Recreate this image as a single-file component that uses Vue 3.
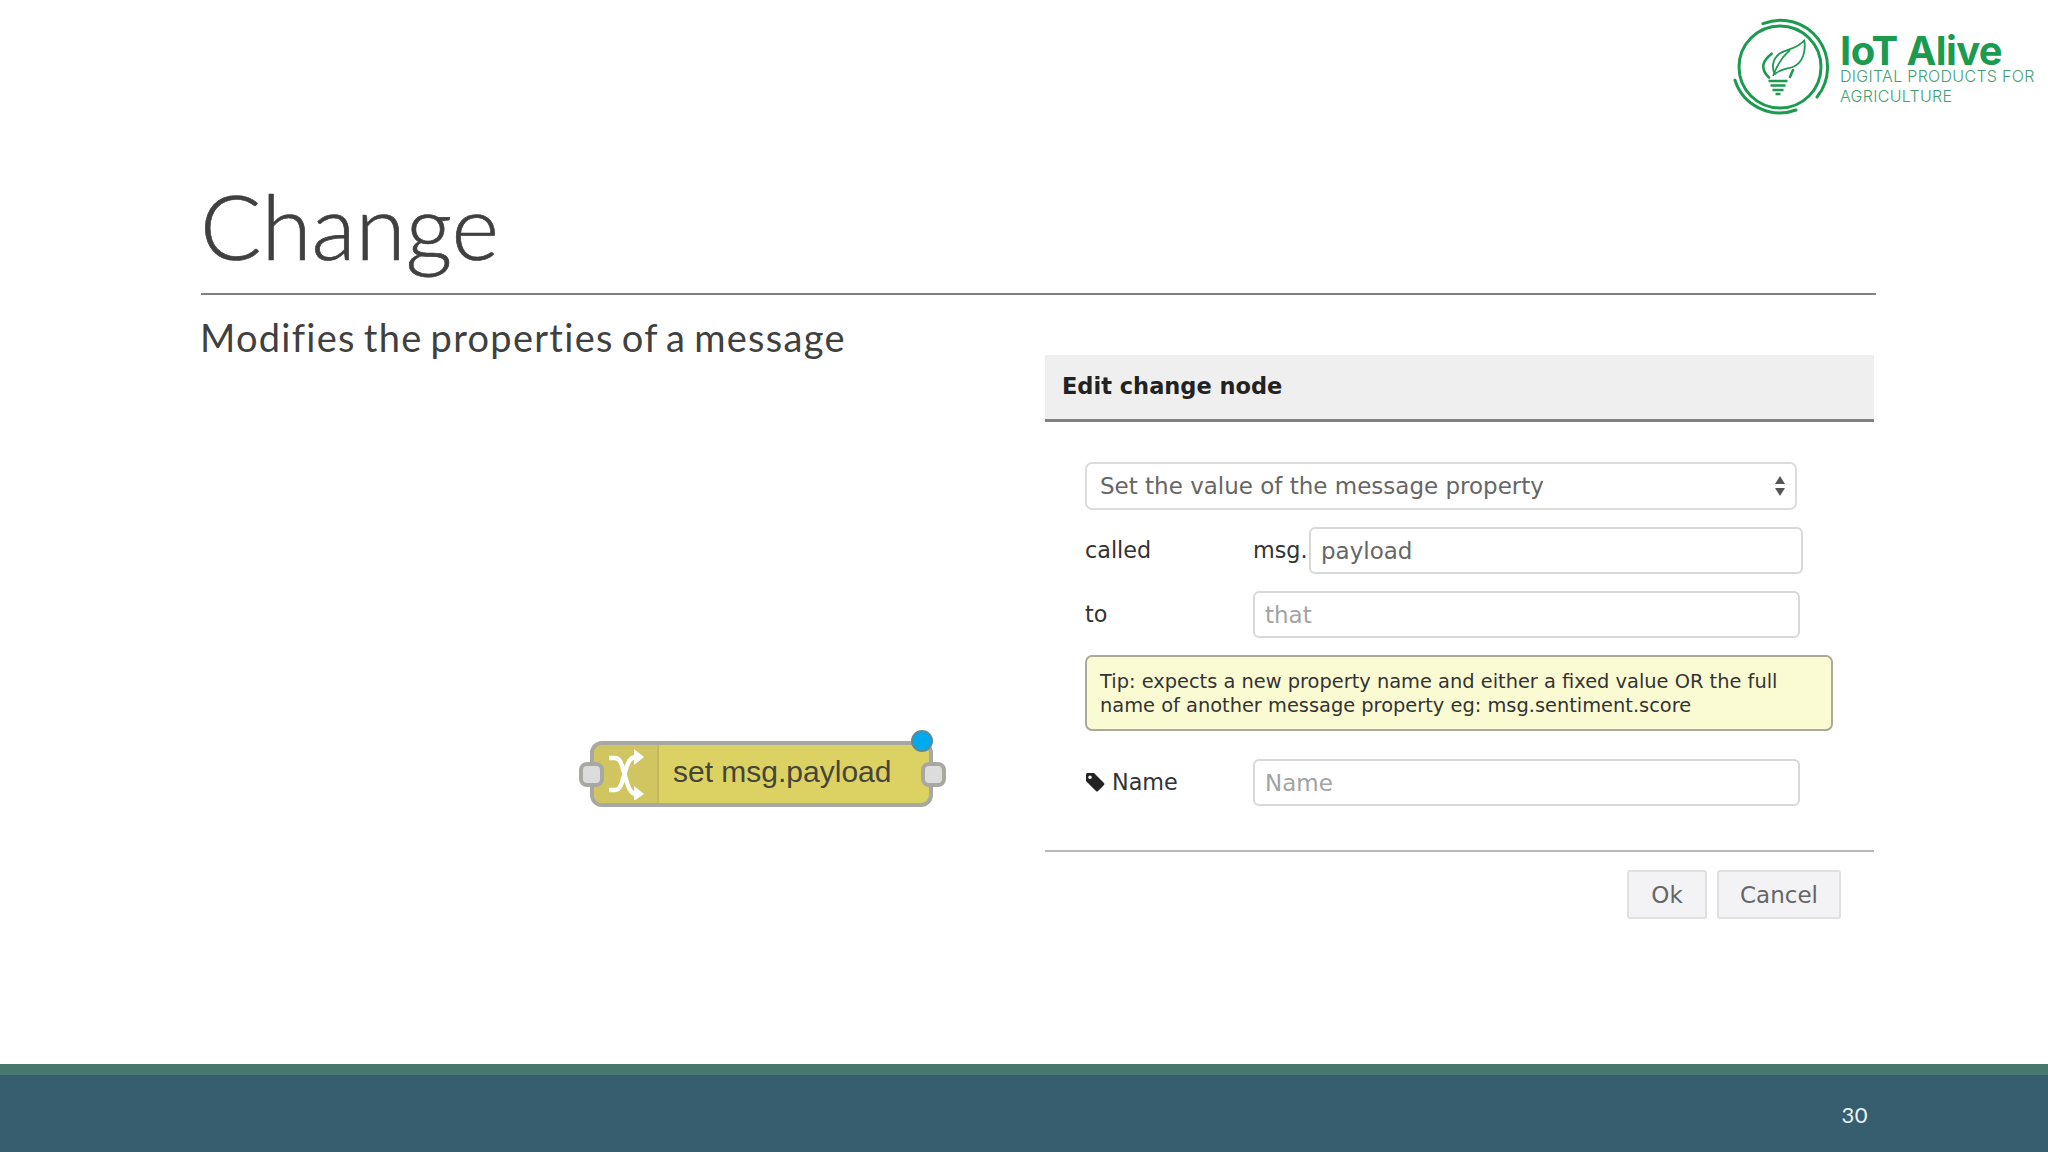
<script setup>
const fields = [
  { label: 'called', prefix: 'msg.', value: 'payload', placeholder: '', cls: 'row-called' },
  { label: 'to', prefix: '', value: '', placeholder: 'that', cls: 'row-to' },
]
</script>

<template>
  <div class="slide">
    <header class="top">
      <div class="logo">
        <svg class="logo-mark" width="98" height="100" viewBox="0 0 98 100" fill="none" stroke="#1c9a50">
          <path d="M30 6.7 A47 47 0 0 1 84 80" stroke-width="3" stroke-linecap="round" />
          <path d="M2 63.3 A47 47 0 0 0 63 93" stroke-width="3" stroke-linecap="round" />
          <circle cx="47" cy="50" r="41" stroke-width="3" />
          <path d="M38.7 36.7 C29 44 27 52 36 60.5" stroke-width="2.6" stroke-linecap="round" />
          <path d="M60 53 L57 60" stroke-width="2.6" stroke-linecap="round" />
          <path d="M42 57 C38 50 40 42 46 37 C53 32 65 32 71.3 23.3 C73 34 70 45 61 49.5 C55 52 47 52 42 57 Z" stroke-width="1.8" stroke-linejoin="round" />
          <path d="M40 59 C44 48 50 39 57 33" stroke-width="1.7" />
          <path d="M35.5 64 H54.5 M37.5 68.5 H52.5 M39.5 73 H50.5 M42.5 77 H47.5" stroke-width="2.6" />
        </svg>
        <div class="logo-text">
          <div class="brand">IoT Alive</div>
          <div class="tag">DIGITAL PRODUCTS FOR<br />AGRICULTURE</div>
        </div>
      </div>
    </header>

    <main class="main">
      <h1 class="title">Change</h1>
      <p class="subtitle">Modifies the properties of a message</p>

      <div class="content">
        <div class="node-col">
          <div class="node">
            <span class="port port-left"></span>
            <div class="node-icon">
              <svg width="38" height="52" viewBox="0 0 38 52" fill="none" stroke="#fff" stroke-width="4.4">
                <path d="M2 10 H8 C14 10 15 18 18 28 C21 38 23 46 29 46" />
                <path d="M2 42 H8 C14 42 15 34 18 24 C21 14 23 9 29 9" />
                <path d="M27 1 L37 9 L27 17 Z M27 38 L37 46 L27 53 Z" fill="#fff" stroke="none" />
              </svg>
            </div>
            <div class="node-label">set msg.payload</div>
            <span class="port port-right"></span>
            <span class="badge"></span>
          </div>
        </div>

        <section class="dialog">
          <div class="dialog-head">Edit change node</div>
          <div class="dialog-body">
            <div class="select">
              <span>Set the value of the message property</span>
              <svg width="12" height="22" viewBox="0 0 12 22" fill="#555">
                <path d="M6 1 L11 9 H1 Z M6 21 L1 13 H11 Z" />
              </svg>
            </div>

            <div v-for="f in fields" :key="f.label" class="row" :class="f.cls">
              <label class="lbl">{{ f.label }}</label>
              <span v-if="f.prefix" class="prefix">{{ f.prefix }}</span>
              <div class="input" :class="{ ph: f.placeholder }">{{ f.value || f.placeholder }}</div>
            </div>

            <div class="tip">Tip: expects a new property name and either a fixed value OR the full<br />name of another message property eg: msg.sentiment.score</div>

            <div class="row row-name">
              <label class="lbl">
                <svg width="20" height="20" viewBox="0 0 20 20" fill="#222">
                  <path d="M1 2.5 Q1 1 2.5 1 H9 L19 11 Q20 12 19 13 L13 19 Q12 20 11 19 L1 9 Z M5 3.5 A1.7 1.7 0 1 0 5 7 A1.7 1.7 0 1 0 5 3.5 Z" fill-rule="evenodd" />
                </svg>
                Name
              </label>
              <div class="input ph">Name</div>
            </div>
          </div>
          <div class="dialog-foot">
            <button class="btn btn-ok">Ok</button>
            <button class="btn btn-cancel">Cancel</button>
          </div>
        </section>
      </div>
    </main>

    <footer class="footer">
      <span class="page">30</span>
    </footer>
  </div>
</template>

<style>
html, body { margin: 0; background: #fff; }
</style>

<style scoped>
.slide {
  width: 2048px;
  height: 1152px;
  display: flex;
  flex-direction: column;
  background: #fff;
  overflow: hidden;
  font-family: "Lato", sans-serif;
}
.top {
  height: 130px;
  flex: none;
  display: flex;
  justify-content: flex-end;
  box-sizing: border-box;
  padding: 16px 13px 0 0;
}
.logo { display: flex; gap: 9px; height: 100px; }
.logo-mark { margin-top: 1px; }
.logo-text { padding-top: 19px; width: 195px; }
.brand {
  font-family: "Inter", sans-serif;
  font-weight: 700;
  font-size: 40px;
  line-height: 32px;
  letter-spacing: -0.6px;
  color: #1c9a50;
}
.tag {
  font-family: "Inter", sans-serif;
  font-weight: 300;
  font-size: 16px;
  line-height: 19.5px;
  letter-spacing: 0.3px;
  color: #43a073;
  white-space: nowrap;
}
.main {
  flex: 1;
  display: flex;
  flex-direction: column;
  padding: 0 172px 0 200px;
  min-height: 0;
}
.title {
  margin: 0 0 0 1px;
  height: 165px;
  box-sizing: border-box;
  border-bottom: 2px solid #808080;
  font-family: "Lato", sans-serif;
  font-weight: 300;
  font-size: 91px;
  line-height: 98px;
  color: #404040;
  padding-top: 46px;
  text-indent: -1px;
  -webkit-text-stroke: 0.7px #404040;
}
.subtitle {
  margin: 19px 0 0;
  font-size: 38px;
  line-height: 46px;
  letter-spacing: 1.28px;
  word-spacing: -3px;
  font-variant-ligatures: none;
  color: #404040;
  height: 46px;
}
.content {
  display: flex;
  margin-right: -1px;
  margin-top: -5px;
}
.node-col { width: 845px; flex: none; padding: 386px 0 0 390px; box-sizing: border-box; }
.node {
  position: relative;
  width: 343px;
  height: 66px;
  display: flex;
  box-sizing: border-box;
  border: 4px solid #a8a8a2;
  border-radius: 12px;
  background: #dcd263;
}
.node-icon {
  width: 63px;
  flex: none;
  background: #d0c560;
  border-right: 2px solid #c5ba58;
  border-radius: 8px 0 0 8px;
  display: flex;
  align-items: center;
  justify-content: center;
}
.node-label {
  font-family: "Liberation Sans", sans-serif;
  font-size: 30px;
  color: #45453a;
  line-height: 54px;
  margin-left: 14px;
  white-space: nowrap;
}
.port {
  position: absolute;
  top: 17px;
  width: 25px;
  height: 25px;
  box-sizing: border-box;
  background: #dcdcdc;
  border: 4px solid #a8a8a2;
  border-radius: 8px;
}
.port-left { left: -15px; }
.port-right { right: -17px; }
.badge {
  position: absolute;
  top: -15px;
  right: -4px;
  width: 22px;
  height: 22px;
  box-sizing: border-box;
  border-radius: 50%;
  background: #00aaee;
  border: 2px solid #5c8a9c;
}
.dialog {
  width: 829px;
  flex: none;
  font-family: "DejaVu Sans", sans-serif;
  color: #333;
  font-size: 23px;
}
.dialog-head {
  height: 67px;
  box-sizing: border-box;
  background: #efefef;
  border-bottom: 3px solid #808080;
  font-weight: 700;
  font-size: 22.5px;
  line-height: 62px;
  padding-left: 17px;
  color: #222;
}
.dialog-body {
  padding: 40px 0 0 40px;
  height: 430px;
  box-sizing: border-box;
  border-bottom: 2px solid #b9b7bb;
}
.select {
  width: 712px;
  height: 48px;
  box-sizing: border-box;
  border: 2px solid #dcdcdc;
  border-radius: 7px;
  display: flex;
  align-items: center;
  justify-content: space-between;
  padding: 0 9px 0 13px;
  color: #666;
}
.row { display: flex; align-items: center; color: #333; }
.lbl {
  width: 168px;
  flex: none;
  display: flex;
  align-items: center;
  gap: 7px;
  white-space: nowrap;
  font-size: 22.3px;
  padding-bottom: 2px;
}
.prefix { width: 56px; flex: none; white-space: nowrap; font-size: 22.3px; padding-bottom: 2px; }
.input {
  box-sizing: border-box;
  height: 47px;
  border: 2px solid #d8d8d8;
  border-radius: 6px;
  padding: 0 10px;
  line-height: 44px;
  color: #666;
  background: #fff;
}
.input.ph { color: #a3a3a3; }
.row-called { margin-top: 17px; }
.row-called .input { width: 494px; }
.row-to { margin-top: 17px; }
.row-to .input, .row-name .input { width: 547px; }
.row-name { margin-top: 28px; }
.tip {
  margin-top: 17px;
  width: 748px;
  height: 76px;
  box-sizing: border-box;
  background: #fbfbd3;
  border: 2px solid #aaa99a;
  border-radius: 7px;
  padding: 13px 13px 0;
  font-size: 19.4px;
  line-height: 24px;
  color: #333;
  white-space: nowrap;
}
.dialog-foot {
  display: flex;
  gap: 10px;
  padding: 18px 0 0 582px;
}
.btn {
  height: 49px;
  box-sizing: border-box;
  border: 2px solid #e0e0e0;
  border-radius: 3px;
  background: #f3f3f5;
  color: #666;
  font: inherit;
  padding: 0;
}
.btn-ok { width: 80px; }
.btn-cancel { width: 124px; }
.footer {
  height: 88px;
  flex: none;
  box-sizing: border-box;
  background: #375e6e;
  border-top: 11px solid #47776d;
  display: flex;
  justify-content: flex-end;
  align-items: center;
  padding: 2px 180px 0 0;
}
.page {
  font-family: "Lato", sans-serif;
  color: #e8f4f4;
  font-size: 22px;
  letter-spacing: 0.5px;
}
</style>
